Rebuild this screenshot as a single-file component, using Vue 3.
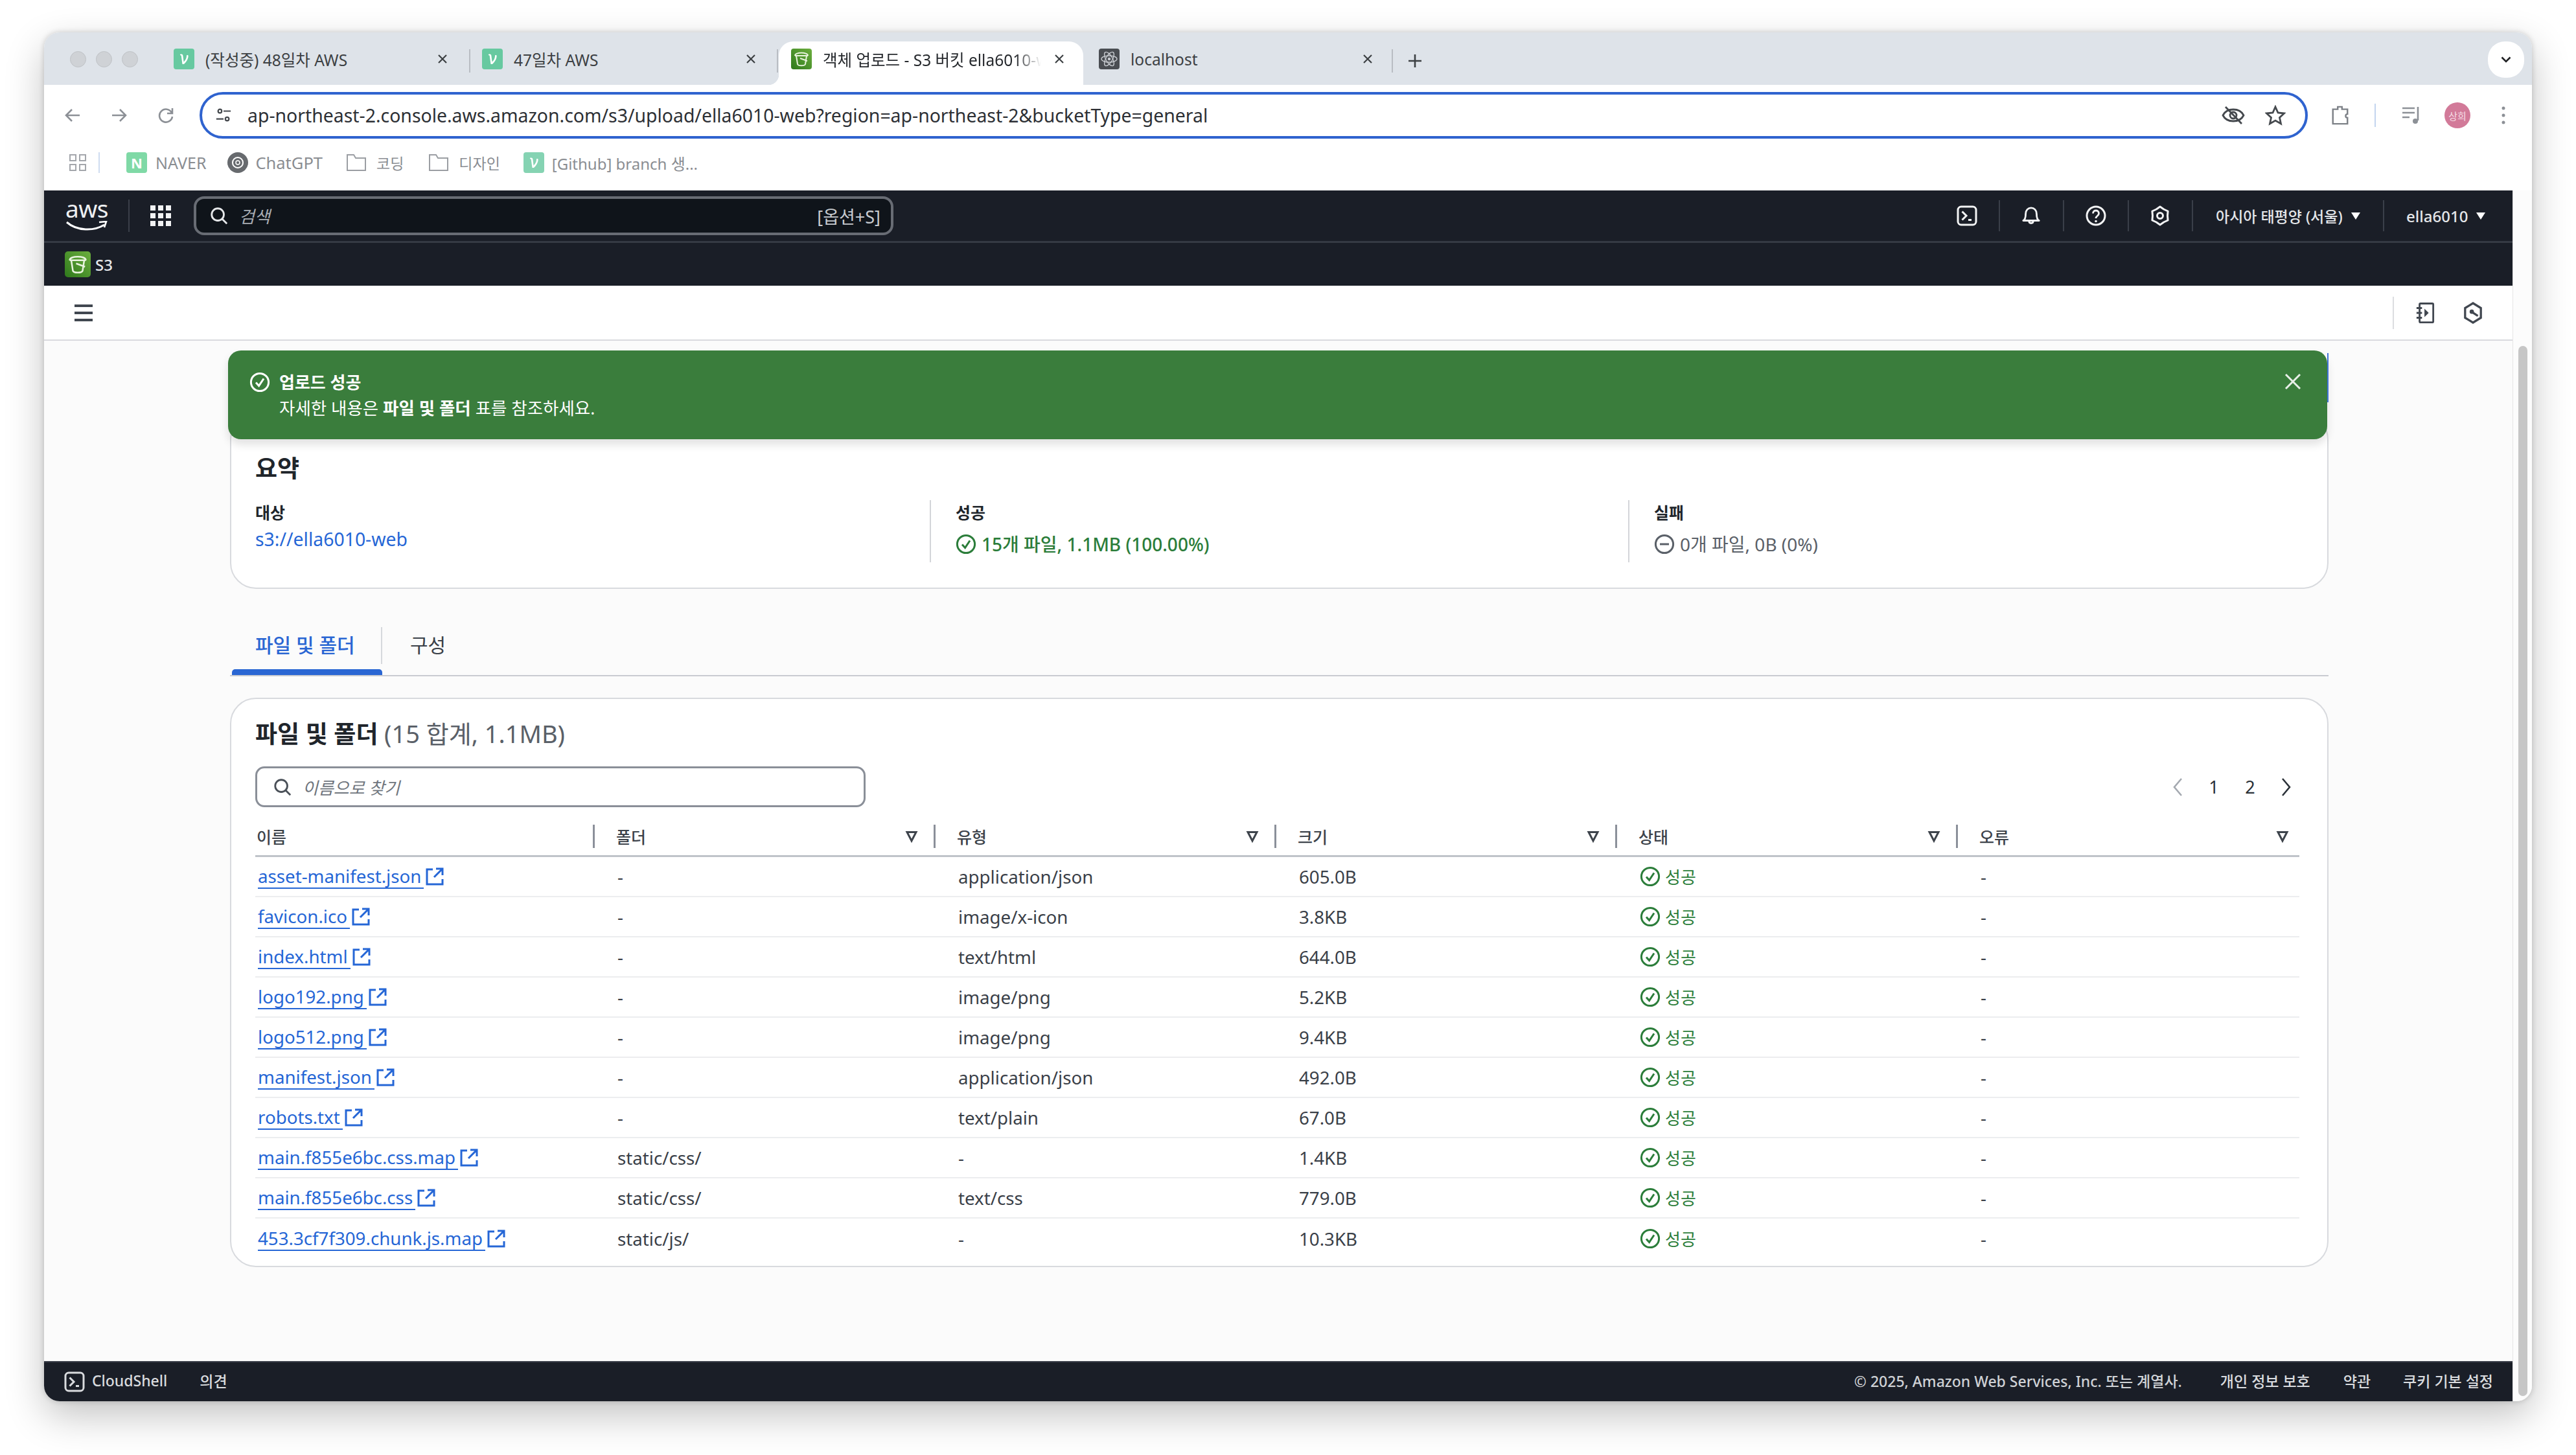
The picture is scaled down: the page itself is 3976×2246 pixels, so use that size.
<script setup>
const tabs = [
  { title: '(작성중) 48일차 AWS', icon: 'velog' },
  { title: '47일차 AWS', icon: 'velog' },
  { title: '객체 업로드 - S3 버킷 ella6010-web', icon: 's3', active: true },
  { title: 'localhost', icon: 'react' }
]
const rows = [
  ['asset-manifest.json', '-', 'application/json', '605.0B'],
  ['favicon.ico', '-', 'image/x-icon', '3.8KB'],
  ['index.html', '-', 'text/html', '644.0B'],
  ['logo192.png', '-', 'image/png', '5.2KB'],
  ['logo512.png', '-', 'image/png', '9.4KB'],
  ['manifest.json', '-', 'application/json', '492.0B'],
  ['robots.txt', '-', 'text/plain', '67.0B'],
  ['main.f855e6bc.css.map', 'static/css/', '-', '1.4KB'],
  ['main.f855e6bc.css', 'static/css/', 'text/css', '779.0B'],
  ['453.3cf7f309.chunk.js.map', 'static/js/', '-', '10.3KB']
]
const heads = ['이름', '폴더', '유형', '크기', '상태', '오류']
</script>

<template>
  <div class="stage">
    <svg class="defs" width="0" height="0" aria-hidden="true">
      <symbol id="i-check" viewBox="0 0 32 32"><circle cx="16" cy="16" r="13.6" fill="none" stroke="currentColor" stroke-width="3"/><path d="M10 16.5l4.6 5L22 10.5" fill="none" stroke="currentColor" stroke-width="3"/></symbol>
      <symbol id="i-ext" viewBox="0 0 28 28"><path d="M11 3H2v23h24v-8M16 2h10v10M26 2L13 15" fill="none" stroke="currentColor" stroke-width="3"/></symbol>
      <symbol id="i-filter" viewBox="0 0 20 20"><path d="M3 3.5h14L10 17z" fill="none" stroke="currentColor" stroke-width="3"/></symbol>
      <symbol id="i-search" viewBox="0 0 32 32"><circle cx="14" cy="14" r="10" fill="none" stroke="currentColor" stroke-width="3"/><path d="M21 21l8 8" stroke="currentColor" stroke-width="3"/></symbol>
      <symbol id="i-shell" viewBox="0 0 32 32"><rect x="2" y="2" width="28" height="28" rx="5" fill="none" stroke="currentColor" stroke-width="3"/><path d="M8.500 9.500l6.500 6.500-6.500 6.500M18 22.500h5" fill="none" stroke="currentColor" stroke-width="3"/></symbol>
      <symbol id="i-folder" viewBox="0 0 32 32"><path d="M2 4h10l3 5h15v19H2z" fill="none" stroke="currentColor" stroke-width="2"/></symbol>
      <symbol id="i-velog" viewBox="0 0 32 32"><rect width="32" height="32" rx="4" fill="#67c9a0"/><path d="M10 9c2-.8 4-.5 4.400 2l1.200 9.500c3-2.700 4.500-6 4.400-9.500 0-1 1.800-1.500 2.500-.5.800 4-2.500 10-6.500 13.500h-2.500l-1.800-13c-.1-.8-.8-1-1.700-.7z" fill="#fff"/></symbol>
      <symbol id="i-s3" viewBox="0 0 32 32"><defs><linearGradient id="s3g" x1="0" y1="1" x2="1" y2="0"><stop offset="0" stop-color="#2f7a1c"/><stop offset="1" stop-color="#6cae3e"/></linearGradient></defs><rect width="32" height="32" rx="4" fill="url(#s3g)"/><path d="M6 11c0-6 20-6 20 0M6 11h20M8 11l2 13c1 3 11 3 12 0l2-13M14 15l11 4" fill="none" stroke="#e8f3dd" stroke-width="2"/></symbol>
      <symbol id="i-react" viewBox="0 0 32 32"><rect width="32" height="32" rx="4" fill="#4a4d52"/><g fill="none" stroke="#c9ccd1" stroke-width="1.300"><ellipse cx="16" cy="16" rx="12" ry="5"/><ellipse cx="16" cy="16" rx="12" ry="5" transform="rotate(60 16 16)"/><ellipse cx="16" cy="16" rx="12" ry="5" transform="rotate(120 16 16)"/></g><circle cx="16" cy="16" r="2.200" fill="#c9ccd1"/></symbol>
    </svg>

    <div class="window">
      <div class="tabstrip">
        <div class="lights"><i></i><i></i><i></i></div>
        <div v-for="t in tabs" :key="t.title" class="tab" :class="{ active: t.active }">
          <svg class="fav"><use :href="'#i-' + t.icon"/></svg>
          <span class="tab-title">{{ t.title }}</span>
          <svg class="tab-x" viewBox="0 0 16 16"><path d="M2 2l12 12M14 2L2 14" stroke="currentColor" stroke-width="2.200"/></svg>
        </div>
        <svg class="plus" viewBox="0 0 22 22"><path d="M11 1v20M1 11h20" stroke="#3c4043" stroke-width="2.600"/></svg>
        <div class="tab-more"><svg viewBox="0 0 16 10" width="16" height="10"><path d="M1.500 1.500L8 8l6.500-6.500" fill="none" stroke="#202124" stroke-width="2.600"/></svg></div>
      </div>

      <div class="toolbar">
        <div class="tbtn"><svg viewBox="0 0 28 28" width="28" height="28"><path d="M25 14H5M13 5l-9 9 9 9" fill="none" stroke="#8c9096" stroke-width="2.600"/></svg></div>
        <div class="tbtn"><svg viewBox="0 0 28 28" width="28" height="28"><path d="M3 14h20M15 5l9 9-9 9" fill="none" stroke="#8c9096" stroke-width="2.600"/></svg></div>
        <div class="tbtn"><svg viewBox="0 0 28 28" width="28" height="28"><path d="M23 10a10 10 0 1 0 1 6M24 3v8h-8" fill="none" stroke="#8c9096" stroke-width="2.600"/></svg></div>
        <div class="omni">
          <svg viewBox="0 0 28 28" width="26" height="26"><circle cx="8" cy="7" r="3" fill="none" stroke="#45494e" stroke-width="2.400"/><path d="M14 7h12M2 20h12" stroke="#45494e" stroke-width="2.400"/><circle cx="20" cy="20" r="3" fill="none" stroke="#45494e" stroke-width="2.400"/></svg>
          <span class="url">ap-northeast-2.console.aws.amazon.com/s3/upload/ella6010-web?region=ap-northeast-2&amp;bucketType=general</span>
          <svg class="eye" viewBox="0 0 36 32" width="36" height="32"><path d="M2 16c6-12 26-12 32 0-6 12-26 12-32 0z" fill="none" stroke="#45494e" stroke-width="2.800"/><circle cx="18" cy="16" r="5" fill="none" stroke="#45494e" stroke-width="2.800"/><path d="M6 3l25 26" stroke="#45494e" stroke-width="2.800"/></svg>
          <svg class="star" viewBox="0 0 32 32" width="32" height="32"><path d="M16 3l4 9 9.500 1-7 6.500 2 9.500-8.500-5-8.500 5 2-9.500-7-6.500 9.500-1z" fill="none" stroke="#45494e" stroke-width="2.800"/></svg>
        </div>
        <svg class="ext" viewBox="0 0 32 36" width="30" height="34"><path d="M4 8h8V4h7v4h9v8c-4 0-4 6 0 6v10H4z" fill="none" stroke="#7d8187" stroke-width="2.600"/></svg>
        <i class="tsep"></i>
        <svg class="media" viewBox="0 0 32 32" width="32" height="32"><path d="M2 5h19M2 12h19M2 19h11M26 3v21" fill="none" stroke="#8c9096" stroke-width="2.600"/><circle cx="22" cy="25" r="4" fill="#8c9096"/></svg>
        <span class="avatar">상희</span>
        <svg class="dots" viewBox="0 0 6 30" width="6" height="30"><circle cx="3" cy="4" r="2.500" fill="#8c9096"/><circle cx="3" cy="15" r="2.500" fill="#8c9096"/><circle cx="3" cy="26" r="2.500" fill="#8c9096"/></svg>
      </div>

      <div class="bookmarks">
        <svg class="bm-apps" viewBox="0 0 28 28" width="28" height="28"><path d="M2 2h9v9H2zM17 2h9v9h-9zM2 17h9v9H2zM17 17h9v9h-9z" fill="none" stroke="#a3a6ab" stroke-width="2"/></svg>
        <i class="bm-sep"></i>
        <span class="bm-n">N</span><span class="bm-t t-naver">NAVER</span>
        <svg class="bm-gpt" viewBox="0 0 32 32" width="32" height="32"><circle cx="16" cy="16" r="16" fill="#676a6e"/><circle cx="16" cy="16" r="8" fill="none" stroke="#fff" stroke-width="2"/><circle cx="16" cy="16" r="3" fill="none" stroke="#fff" stroke-width="1.500"/></svg>
        <span class="bm-t t-gpt">ChatGPT</span>
        <svg class="bm-fold"><use href="#i-folder"/></svg><span class="bm-t t-cod">코딩</span>
        <svg class="bm-fold f2"><use href="#i-folder"/></svg><span class="bm-t t-des">디자인</span>
        <svg class="bm-v"><use href="#i-velog"/></svg><span class="bm-t t-git">[Github] branch 생...</span>
      </div>

      <div class="lower">
        <div class="app">
          <div class="awsnav">
            <div class="logo"><span class="logo-t">aws</span>
              <svg viewBox="0 0 64 16" width="64" height="16"><path d="M1 2c16 14 42 14 58 4" fill="none" stroke="#fff" stroke-width="3"/><path d="M51 2l11-1-3 9" fill="none" stroke="#fff" stroke-width="2.600"/></svg>
            </div>
            <i class="nsep"></i>
            <svg class="grid9" viewBox="0 0 32 32" width="32" height="32"><path fill="#f2f3f4" d="M0 0h8v8H0zM12 0h8v8h-8zM24 0h8v8h-8zM0 12h8v8H0zM12 12h8v8h-8zM24 12h8v8h-8zM0 24h8v8H0zM12 24h8v8h-8zM24 24h8v8h-8z"/></svg>
            <div class="awssearch">
              <svg width="30" height="30" class="as-i"><use href="#i-search"/></svg>
              <span class="as-p">검색</span>
              <span class="as-k">[옵션+S]</span>
            </div>
            <div class="navright">
              <div class="nc"><svg width="32" height="32"><use href="#i-shell"/></svg></div>
              <div class="nc"><svg viewBox="0 0 32 34" width="30" height="32"><path d="M3 25c3-1.500 4-5 4-11 0-6 4-10 9-10s9 4 9 10c0 6 1 9.500 4 11zM12.500 25.500c0 5 7 5 7 0" fill="none" stroke="#f2f3f4" stroke-width="3" stroke-linejoin="round"/></svg></div>
              <div class="nc"><svg viewBox="0 0 32 32" width="32" height="32"><circle cx="16" cy="16" r="14" fill="none" stroke="#f2f3f4" stroke-width="3"/><path d="M11.500 12.500c0-6 9-6 9 0 0 4-4.500 3.500-4.500 7.500" fill="none" stroke="#f2f3f4" stroke-width="2.800"/><circle cx="16" cy="24.500" r="1.800" fill="#f2f3f4"/></svg></div>
              <div class="nc"><svg viewBox="0 0 32 32" width="32" height="32"><path d="M16 2L21.700 6 28.100 9 27.500 16 28.100 23 21.700 26 16 30 10.300 26 3.900 23 4.500 16 3.900 9 10.300 6z" fill="none" stroke="#f2f3f4" stroke-width="3" stroke-linejoin="round"/><circle cx="16" cy="16" r="4.500" fill="none" stroke="#f2f3f4" stroke-width="3"/></svg></div>
              <div class="nc region"><span>아시아 태평양 (서울)</span><i class="tri"></i></div>
              <div class="nc user"><span>ella6010</span><i class="tri"></i></div>
            </div>
          </div>

          <div class="svcbar">
            <svg class="s3i"><use href="#i-s3"/></svg><span>S3</span>
          </div>

          <div class="main">
            <div class="subhead">
              <div class="burger"><i></i><i></i><i></i></div>
              <i class="sh-sep"></i>
              <svg class="sh-a" viewBox="0 0 32 36" width="30" height="34"><path d="M7 4c0-1 .5-1.500 1.500-1.500H28c1 0 1.500.5 1.500 1.500v28c0 1-.5 1.500-1.500 1.500H8.500C7.500 33.500 7 33 7 32zM2 10h9M2 18h9M2 26h9" fill="none" stroke="#414750" stroke-width="3"/><path d="M15 11l7 7-7 7z" fill="#414750"/></svg>
              <svg class="sh-b" viewBox="0 0 32 36" width="30" height="34"><path d="M16 2l13 8v16l-13 8-13-8V10z" fill="none" stroke="#414750" stroke-width="3.500"/><circle cx="14" cy="16" r="3.500" fill="#414750"/><path d="M15 17l9 6" fill="none" stroke="#414750" stroke-width="3.500"/></svg>
            </div>

            <div class="content">
              <div class="banner">
                <svg class="b-ic"><use href="#i-check"/></svg>
                <div class="b-txt">
                  <div class="b-title">업로드 성공</div>
                  <div class="b-sub">자세한 내용은 <b>파일 및 폴더</b> 표를 참조하세요.</div>
                </div>
                <svg class="b-x" viewBox="0 0 26 26" width="26" height="26"><path d="M2 2l22 22M24 2L2 24" stroke="#e8efe8" stroke-width="3"/></svg>
              </div>

              <section class="card summary">
                <h2 class="h-sum">요약</h2>
                <div class="sumgrid">
                  <div class="sc">
                    <div class="lab">대상</div>
                    <a class="s-link">s3://ella6010-web</a>
                  </div>
                  <div class="sc div">
                    <div class="lab">성공</div>
                    <div class="val ok"><svg width="32" height="32"><use href="#i-check"/></svg>15개 파일, 1.1MB (100.00%)</div>
                  </div>
                  <div class="sc div">
                    <div class="lab">실패</div>
                    <div class="val muted"><svg viewBox="0 0 32 32" width="32" height="32"><circle cx="16" cy="16" r="13.600" fill="none" stroke="currentColor" stroke-width="3"/><path d="M9 16h14" stroke="currentColor" stroke-width="3"/></svg>0개 파일, 0B (0%)</div>
                  </div>
                </div>
              </section>

              <div class="ptabs">
                <div class="ptab on">파일 및 폴더</div>
                <div class="ptab">구성</div>
              </div>

              <section class="card files">
                <h2 class="h-files">파일 및 폴더 <span>(15 합계, 1.1MB)</span></h2>
                <div class="frow">
                  <div class="finput">
                    <svg width="30" height="30"><use href="#i-search"/></svg>
                    <span>이름으로 찾기</span>
                  </div>
                  <div class="pager">
                    <svg viewBox="0 0 16 30" width="16" height="30"><path d="M14 2L3 15l11 13" fill="none" stroke="#a4a9b0" stroke-width="2.600"/></svg>
                    <span>1</span><span>2</span>
                    <svg viewBox="0 0 16 30" width="16" height="30"><path d="M2 2l11 13L2 28" fill="none" stroke="#2b3138" stroke-width="2.600"/></svg>
                  </div>
                </div>

                <div class="table">
                  <div class="thead">
                    <div v-for="(h, i) in heads" :key="h" class="th" :class="{ last: i === 5 }">
                      <span>{{ h }}</span>
                      <svg v-if="i > 0" width="20" height="20"><use href="#i-filter"/></svg>
                    </div>
                  </div>
                  <div v-for="r in rows" :key="r[0]" class="tr">
                    <div class="td first"><a class="f-link">{{ r[0] }}</a><svg class="f-ext" width="28" height="28"><use href="#i-ext"/></svg></div>
                    <div class="td">{{ r[1] }}</div>
                    <div class="td">{{ r[2] }}</div>
                    <div class="td">{{ r[3] }}</div>
                    <div class="td st"><svg width="32" height="32"><use href="#i-check"/></svg>성공</div>
                    <div class="td">-</div>
                  </div>
                </div>
              </section>
            </div>
          </div>

          <div class="footer">
            <svg width="32" height="32"><use href="#i-shell"/></svg>
            <span class="f-cs">CloudShell</span>
            <span class="f-op">의견</span>
            <span class="f-copy">© 2025, Amazon Web Services, Inc. 또는 계열사.</span>
            <span class="f-a">개인 정보 보호</span>
            <span class="f-b">약관</span>
            <span class="f-c">쿠키 기본 설정</span>
          </div>
        </div>
        <div class="scroll"><i></i></div>
      </div>
    </div>
  </div>
</template>

<style>
html, body { margin: 0; background: #fff; }
</style>

<style scoped>
* { box-sizing: border-box; }
i { display: block; font-style: normal; }
.defs { position: absolute; }
.stage {
  width: 3976px; height: 2246px; padding: 50px 68px 83px; background: #fff; overflow: hidden;
  font-family: "Noto Sans", "Noto Sans CJK KR", sans-serif; font-size: 26px; color: #2a3038;
}
.window {
  width: 3840px; height: 2113px; display: flex; flex-direction: column; background: #fff;
  border-radius: 24px; overflow: hidden;
  box-shadow: 0 22px 60px rgba(0,0,0,.24), 0 0 8px rgba(0,0,0,.18);
}
/* tab strip */
.tabstrip { height: 81px; flex: none; background: #dee3e9; display: flex; align-items: flex-end; padding-left: 182px; position: relative; }
.lights { position: absolute; left: 40px; top: 29px; display: flex; gap: 15px; }
.lights i { width: 25px; height: 25px; border-radius: 50%; background: #cfd2d6; border: 1px solid #bfc2c6; }
.tab { width: 475px; height: 67px; display: flex; align-items: center; position: relative; padding: 0 0 13px 18px; color: #3c4043; font-size: 24.500px; }
.tab::after { content: ""; position: absolute; right: 0; top: 12px; height: 36px; width: 2px; background: #b9bdc3; }
.tab.active { background: #fff; border-radius: 22px 22px 0 0; width: 470px; color: #26292d; margin-left: 1px; margin-right: 6px; padding-left: 19px; }
.tab.active::after { display: none; }
.tab.active::before { content: ""; position: absolute; left: -16px; bottom: 0; width: 16px; height: 16px; background: radial-gradient(circle at 0 0, transparent 16px, #fff 16.5px); }
.fav { width: 32px; height: 32px; flex: none; }
.tab-title { margin-left: 17px; width: 338px; overflow: hidden; white-space: nowrap; flex: none; }
.tab-x { width: 16px; height: 16px; margin-left: 20px; flex: none; color: #3c4043; }
.tab:nth-of-type(2) { width: 476px; }
.tab:nth-of-type(5) { width: 472px; }
.tab.active .tab-title { width: 337px; -webkit-mask-image: linear-gradient(90deg, #000 88%, transparent); mask-image: linear-gradient(90deg, #000 88%, transparent); }
.plus { width: 22px; height: 22px; margin: 0 0 26px 23px; }
.tab-more { position: absolute; right: 12px; top: 14px; width: 56px; height: 56px; background: #fff; border-radius: 26px; display: flex; align-items: center; justify-content: center; }
/* toolbar */
.toolbar { height: 94px; flex: none; display: flex; align-items: center; padding-left: 8px; }
.tbtn { width: 72px; display: flex; justify-content: center; }
.omni { width: 3254px; height: 72px; margin-left: 16px; border: 4px solid #2f63cf; border-radius: 36px; display: flex; align-items: center; padding: 0 30px 0 20px; flex: none; }
.url { margin-left: 24px; color: #2d3035; font-size: 28.400px; white-space: nowrap; }
.eye { margin-left: auto; }
.star { margin-left: 31px; }
.ext { margin-left: 35px; flex: none; }
.tsep { width: 2px; height: 36px; background: #c3d5ef; margin-left: 38px; flex: none; }
.media { margin-left: 39px; flex: none; }
.avatar { margin-left: 35px; width: 40px; height: 40px; border-radius: 50%; background: #d27a99; color: #f6dde6; font-size: 15px; display: flex; align-items: center; justify-content: center; flex: none; }
.dots { margin-left: 48px; flex: none; }
/* bookmarks */
.bookmarks { height: 69px; flex: none; display: flex; align-items: center; padding: 0 0 17px 38px; color: #8a8d92; font-size: 23px; }
.bm-sep { width: 2px; height: 32px; background: #cfdcf0; margin-left: 18px; }
.bm-n, .bm-v { width: 32px; height: 32px; flex: none; }
.bm-n { margin-left: 41px; border-radius: 4px; background: #7fd9a6; color: #fff; font-weight: 700; font-size: 22px; display: flex; align-items: center; justify-content: center; }
.t-naver { margin-left: 13px; font-size: 25px; }
.bm-gpt { margin-left: 33px; flex: none; }
.t-gpt { margin-left: 11px; font-size: 25.500px; }
.bm-fold { width: 32px; height: 32px; margin-left: 36px; flex: none; color: #9b9ea3; }
.f2 { margin-left: 38px; }
.t-cod, .t-des { margin-left: 15px; }
.bm-v { margin-left: 36px; opacity: .8; }
.t-git { margin-left: 12px; font-size: 24px; }
/* lower part: page column and window scrollbar */
.lower { flex: 1; min-height: 0; display: flex; }
.app { width: 3810px; flex: none; display: flex; flex-direction: column; }
/* aws nav */
.awsnav { height: 81px; flex: none; background: #1a1e27; display: flex; align-items: center; padding-left: 35px; border-bottom: 3px solid #353a44; color: #fff; }
.logo { width: 62px; height: 56px; display: flex; flex-direction: column; align-items: center; line-height: 34px; }
.logo-t { font-size: 37px; font-weight: 400; letter-spacing: -.5px; height: 36px; color: #eef0f2; }
.nsep { width: 2px; height: 50px; background: #3a3f49; }
.logo + .nsep { margin-left: 33px; }
.grid9 { margin-left: 32px; flex: none; }
.awssearch { width: 1080px; height: 60px; margin-left: 35px; border: 4px solid #686c74; border-radius: 16px; background: #0f141a; display: flex; align-items: center; padding: 0 16px 0 20px; color: #c7cbd0; }
.as-i { flex: none; color: #e6e8ea; }
.as-p { margin-left: 16px; font-style: italic; font-size: 26px; color: #a9adb3; }
.as-k { margin-left: auto; font-size: 27px; }
.navright { margin-left: auto; display: flex; align-items: center; height: 48px; }
.nc { width: 99.500px; height: 48px; display: flex; align-items: center; justify-content: center; border-right: 2px solid #3a3f49; color: #f2f3f4; font-size: 24px; font-weight: 500; white-space: nowrap; }
.region { width: 295px; justify-content: flex-start; padding-left: 35px; color: #e4e6e9; font-size: 23px; }
.user { width: 198px; justify-content: flex-start; padding-left: 34px; border-right: 0; color: #e4e6e9; }
.tri { width: 0; height: 0; border-left: 7px solid transparent; border-right: 7px solid transparent; border-top: 11px solid #fff; margin-left: 13px; }
.svcbar { height: 66px; flex: none; background: #1a1e27; display: flex; align-items: center; padding-left: 32px; color: #e7e9ec; font-size: 24px; font-weight: 500; }
.s3i { width: 40px; height: 40px; margin-right: 7px; }
/* body */
.main { flex: 1; min-height: 0; display: flex; flex-direction: column; background: #fbfbfb; }
.scroll { width: 30px; flex: none; background: #fcfcfc; border-left: 1px solid #e6e6e6; padding: 240px 8px 8px 8px; }
.scroll i { width: 14px; height: 100%; border-radius: 7px; background: #c6c6c6; }
.subhead { height: 85px; flex: none; background: #fff; border-bottom: 2px solid #d9dade; display: flex; align-items: center; padding: 0 46px 0 47px; }
.burger { display: flex; flex-direction: column; gap: 7px; width: 28px; }
.burger i { height: 4px; background: #414750; }
.sh-sep { width: 2px; height: 50px; background: #dcdde0; margin-left: auto; }
.sh-a { margin-left: 33px; }
.sh-b { margin-left: 44px; }
.content { flex: 1; padding: 15px 0 0 287px; min-height: 0; overflow: hidden; }
/* banner */
.banner { width: 3240px; height: 137px; margin-left: -3px; background: #3a7d3c; border-radius: 20px; display: flex; color: #fff; position: relative; z-index: 1; padding: 33px 40px 0 33px; box-shadow: 0 8px 14px rgba(0,0,0,.12); }
.banner::after { content: ""; position: absolute; right: -2px; top: 4px; width: 2px; height: 76px; background: #3f72d8; }
.b-ic { width: 32px; height: 32px; flex: none; }
.b-txt { margin-left: 14px; line-height: 40px; font-size: 26px; }
.b-title { font-weight: 700; margin-top: -4px; }
.b-sub { font-size: 26.500px; }
.b-sub b { font-weight: 700; }
.b-x { margin-left: auto; margin-top: 2px; }
/* cards */
.card { width: 3239px; background: #fff; border: 2px solid #d8dade; border-radius: 40px; }
.summary { margin-top: -40px; padding: 58px 0 39px 37px; }
.h-sum { margin: 0; font-size: 37px; line-height: 50px; font-weight: 700; color: #20252b; }
.sumgrid { margin-top: 24px; display: grid; grid-template-columns: 1041px 1078px 1fr; height: 96px; }
.sc.div { border-left: 2px solid #d3d5d9; padding-left: 38px; }
.lab { line-height: 38px; font-weight: 700; font-size: 25px; color: #20252b; }
.s-link { display: block; margin-top: 3px; line-height: 38px; color: #2566d6; font-size: 28.400px; }
.val { margin-top: 11px; line-height: 38px; display: flex; align-items: center; gap: 8px; font-size: 28px; }
.ok { color: #2b7d3a; font-weight: 500; }
.muted { color: #5a6068; }
/* tabs */
.ptabs { width: 3239px; height: 94px; margin-top: 41px; border-bottom: 2px solid #c9cbd1; display: flex; font-size: 30px; }
.ptab { position: relative; height: 92px; padding: 0 0 4px 43px; display: flex; align-items: center; color: #3a4048; }
.ptab.on { width: 232px; margin-left: 3px; padding-left: 36px; color: #2a66d3; font-weight: 500; }
.ptab.on::before { content: ""; position: absolute; left: 0; right: 0; bottom: 0; height: 9px; background: #2a66d3; border-radius: 5px 5px 0 0; }
.ptab.on::after { content: ""; position: absolute; right: 0; top: 18px; height: 57px; width: 2px; background: #d6d8dc; }
/* files */
.files { margin-top: 33px; padding: 28px 43px 11px 37px; }
.h-files { margin: 0; font-size: 37px; line-height: 50px; font-weight: 700; color: #20252b; }
.h-files span { font-weight: 400; color: #5a6068; font-size: 38px; }
.frow { margin-top: 25px; display: flex; align-items: center; height: 63px; }
.finput { width: 942px; height: 63px; border: 3px solid #8a8f98; border-radius: 14px; display: flex; align-items: center; padding-left: 24px; color: #4a5058; }
.finput span { margin-left: 16px; font-style: italic; color: #6f757d; }
.pager { margin-left: auto; display: grid; grid-template-columns: repeat(4, 40px); gap: 16px; justify-items: center; align-items: center; color: #2b3138; font-size: 27px; }
.table { width: 3155px; }
.thead { display: grid; grid-template-columns: 524px repeat(4, 526px) 527px; height: 77px; padding-top: 27px; border-bottom: 3px solid #bfc3c9; }
.th { height: 36px; display: flex; align-items: center; justify-content: space-between; padding: 0 24px 0 33px; border-right: 3px solid #8b909a; font-weight: 500; font-size: 25px; color: #3d434b; }
.th:first-child { padding-left: 2px; }
.th.last { border-right: 0; padding-right: 16px; }
.th svg { color: #3d434b; flex: none; }
.tr { display: grid; grid-template-columns: 524px repeat(4, 526px) 527px; height: 62px; border-bottom: 2px solid #ecedef; }
.tr:last-child { border-bottom: 0; }
.td { display: flex; align-items: center; padding-left: 35px; color: #3a4048; white-space: nowrap; font-size: 27.700px; }
.td.first { padding-left: 4px; }
.f-link { color: #2566d6; border-bottom: 2px solid #2566d6; padding-right: 4px; line-height: 36px; }
.f-ext { margin-left: 3px; color: #2566d6; flex: none; }
.st { color: #2b7d3a; gap: 7px; font-size: 26px; }
/* footer */
.footer { height: 62px; flex: none; background: #1a1e27; border-top: 2px solid #3b404a; display: flex; align-items: center; padding: 0 0 4px 31px; color: #d9dbde; font-size: 23px; font-weight: 500; white-space: nowrap; }
.footer svg { margin-top: 4px; }
.f-cs { margin-left: 11px; }
.f-op { margin-left: 50px; }
.f-copy { margin-left: auto; color: #cfd2d6; }
.f-a { margin-left: 59px; }
.f-b { margin-left: 51px; }
.f-c { margin-left: 50px; margin-right: 30px; }
</style>
